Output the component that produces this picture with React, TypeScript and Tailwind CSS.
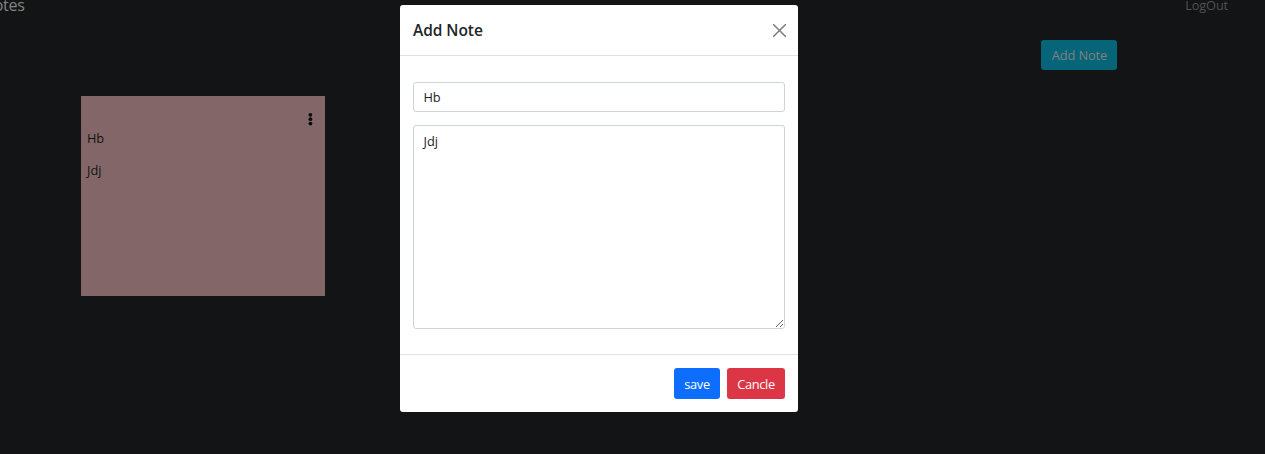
import { useState } from "react";

function Page() {
  return (
    <div className="h-full">
      <nav className="flex h-10 items-start justify-between pr-[37px]">
        <span className="-ml-[18px] -mt-[7px] text-[16px] leading-6 tracking-[-0.3px] text-[#838485]">Notes</span>
        <span className="-mt-[5px] text-[12.8px] leading-5 tracking-[-0.15px] text-[#505253]">LogOut</span>
      </nav>
      <div className="flex justify-end pr-[148px]">
        <button className="h-[30px] w-[76px] whitespace-nowrap rounded-[3px] bg-[#066578] pl-px pt-0.5 text-[12.8px] tracking-[-0.1px] text-[#808080]">
          Add Note
        </button>
      </div>
      <section className="ml-[81px] mt-[26px] h-[200px] w-[244px] bg-[#836768] px-1.5 pt-[15px] text-[12.8px] text-[#111315]">
        <div className="flex h-[17px] justify-end pr-[5px]">
          <svg width="8" height="17" viewBox="0 0 8 17" fill="#0b0c0d">
            <circle cx="4.4" cy="3.8" r="1.9" />
            <circle cx="4.4" cy="8.2" r="1.9" />
            <circle cx="4.4" cy="12.6" r="1.9" />
          </svg>
        </div>
        <p className="leading-5 tracking-[-0.3px]">Hb</p>
        <p className="mt-3 leading-5">Jdj</p>
      </section>
    </div>
  );
}

function NoteDialog() {
  const [title, setTitle] = useState("Hb");
  const [body, setBody] = useState("Jdj");
  return (
    <div role="dialog" className="flex h-[407px] w-[398px] flex-col rounded-[3px] bg-white text-[#212529]">
      <header className="flex h-[51px] items-center justify-between border-b border-[#dee2e6] pl-[13px] pr-3">
        <h5 className="text-[15.5px] font-[560] leading-6 tracking-[-0.05px]">Add Note</h5>
        <button aria-label="Close">
          <svg width="13" height="13" viewBox="0 0 13 13" stroke="#7f7f7f" strokeWidth="1.6" strokeLinecap="round">
            <path d="M.7.7 12.3 12.3M12.3.7.7 12.3" />
          </svg>
        </button>
      </header>
      <div className="flex grow flex-col px-[13px] pt-[26px] text-[12.8px]">
        <input
          className="h-[30px] w-full rounded-[3px] border border-[#ced4da] px-[9.5px] tracking-[-0.3px] outline-none"
          value={title}
          onChange={(e) => setTitle(e.target.value)}
        />
        <textarea
          className="mt-[13px] h-[204px] w-full resize-y rounded-[3px] border border-[#ced4da] px-[9.5px] py-[5px] leading-5 outline-none"
          value={body}
          onChange={(e) => setBody(e.target.value)}
        />
      </div>
      <footer className="flex h-[58px] items-center justify-end gap-[7px] border-t border-[#dee2e6] pr-[13px] text-[12.8px] text-white">
        <button className="h-[31px] w-[46px] rounded-[3px] bg-[#0d6efd] pt-0.5 tracking-[-0.3px]">save</button>
        <button className="h-[31px] w-[58px] rounded-[3px] bg-[#dc3545] pt-0.5 tracking-[-0.35px]">Cancle</button>
      </footer>
    </div>
  );
}

export default function App() {
  return (
    <main className="relative h-[454px] w-[1265px] overflow-hidden bg-[#121415] font-['Open_Sans','Noto_Sans',sans-serif]">
      <Page />
      <div className="absolute left-[400px] top-[5px]">
        <NoteDialog />
      </div>
    </main>
  );
}
